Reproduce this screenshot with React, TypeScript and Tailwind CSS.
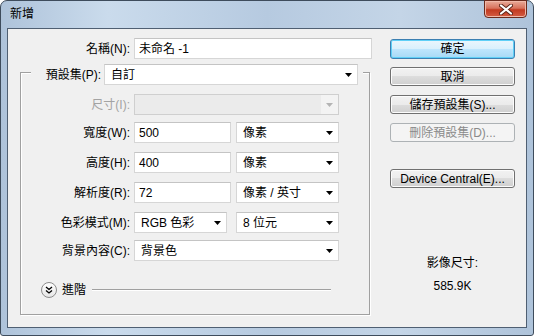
import React from "react";

const font = "font-['Liberation_Sans','Noto_Sans_CJK_TC',sans-serif]";

function Arrow({ disabled }: { disabled?: boolean }) {
  return (
    <svg width="7" height="4" viewBox="0 0 7 4" className="shrink-0">
      <polygon points="0,0 7,0 3.5,4" fill={disabled ? "#b4b4b4" : "#000"} />
    </svg>
  );
}

function Field({ value, w }: { value: string; w: string }) {
  return (
    <div className={`${w} h-[21px] bg-white border border-[#d6d6d6] border-t-[#c4c4c4] flex items-center pl-[4px] text-[12px]`}>
      {value}
    </div>
  );
}

function Select({ value, w, disabled }: { value?: string; w: string; disabled?: boolean }) {
  if (disabled) {
    return (
      <div className={`${w} h-[21px] border border-[#cfcfcf] bg-[#ebebeb] flex`}>
        <div className="flex-1" />
        <div className="w-[17px] bg-[#f3f3f3] flex items-center justify-center">
          <Arrow disabled />
        </div>
      </div>
    );
  }
  return (
    <div className={`${w} h-[21px] bg-white border border-[#d6d6d6] border-t-[#c4c4c4] flex items-center pl-[6px] pr-[5px] text-[12px]`}>
      <span className="flex-1">{value}</span>
      <Arrow />
    </div>
  );
}

function Btn({
  children,
  kind = "normal",
  className = "",
}: {
  children: React.ReactNode;
  kind?: "normal" | "primary" | "disabled";
  className?: string;
}) {
  const skin =
    kind === "primary"
      ? "border-[#3c7fb1] bg-[linear-gradient(#eaf6fd,#d9f0fc_50%,#bee6fd_50%,#a7d9f5)] shadow-[inset_0_0_0_1px_#5fd0f7]"
      : kind === "disabled"
      ? "border-[#adb2b5] bg-[#f4f4f4] text-[#8a8a8a]"
      : "border-[#707070] bg-[linear-gradient(#f2f2f2,#ebebeb_50%,#dddddd_50%,#cfcfcf)] shadow-[inset_0_0_0_1px_#fcfcfc]";
  return (
    <div className={`w-[125px] h-[19px] rounded-[3px] border ${skin} flex items-center justify-center text-[12px] ${className}`}>
      {children}
    </div>
  );
}

function Row({
  label,
  disabled,
  className = "",
  children,
}: {
  label: string;
  disabled?: boolean;
  className?: string;
  children: React.ReactNode;
}) {
  return (
    <div className={`flex items-center ${className}`}>
      <div className={`w-[113px] pr-[4px] text-right text-[12px] ${disabled ? "text-[#a3a3a3]" : ""}`}>{label}</div>
      {children}
    </div>
  );
}

export default function App() {
  return (
    <div className={`${font} w-[534px] h-[336px] flex flex-col px-[6px] pb-[7px] border border-[#3e4c5c] rounded-t-[7px] rounded-b-[3px] bg-[linear-gradient(90deg,#aec3da,#cadbec_20%,#b6cae0_50%,#c4d5e7_75%,#aec3da)] text-black`}>
      {/* title bar */}
      <div className="h-[27px] flex items-start justify-between">
        <div className="pl-[3px] pt-[4px] text-[12px]">新增</div>
        <div className="w-[43px] h-[18px] -mt-px rounded-b-[4px] border border-[#6b2a1c] bg-[linear-gradient(#e9ab99,#d7725c_45%,#c23a20_55%,#d45c43)] shadow-[inset_0_0_0_1px_#f0b9a9] flex items-center justify-center">
          <svg width="14" height="11" viewBox="0 0 14 11">
            <path d="M2 1.5 L12 9.5 M12 1.5 L2 9.5" stroke="#5a2418" strokeWidth="4" strokeLinecap="round" />
            <path d="M2 1.5 L12 9.5 M12 1.5 L2 9.5" stroke="#ffffff" strokeWidth="2.2" strokeLinecap="round" />
          </svg>
        </div>
      </div>

      {/* client */}
      <div className="flex-1 border border-[#4f5f72] bg-[#f0f0f0] flex">
        {/* left column */}
        <div className="w-[364px] pt-[9px]">
          <div className="flex items-center">
            <div className="w-[126px] pr-[4px] text-right text-[12px]">名稱(N):</div>
            <Field value="未命名 -1" w="w-[238px]" />
          </div>

          <div className="ml-[12px] mt-[13px] w-[350px] h-[243px] border border-[#a0a0a0] shadow-[1px_1px_0_#fff,inset_1px_1px_0_#fff]">
            <div className="-mt-[9px] ml-[10px] w-[332px] pr-[5px] bg-[#f0f0f0] flex items-center">
              <div className="w-[73px] pr-[3px] text-right text-[12px]">預設集(P):</div>
              <Select value="自訂" w="w-[254px]" />
            </div>

            <Row label="尺寸(I):" disabled className="mt-[9px]">
              <Select w="w-[205px]" disabled />
            </Row>

            <Row label="寬度(W):" className="mt-[7px]">
              <Field value="500" w="w-[97px]" />
              <div className="ml-[5px]">
                <Select value="像素" w="w-[103px]" />
              </div>
            </Row>

            <Row label="高度(H):" className="mt-[9px]">
              <Field value="400" w="w-[97px]" />
              <div className="ml-[5px]">
                <Select value="像素" w="w-[103px]" />
              </div>
            </Row>

            <Row label="解析度(R):" className="mt-[9px]">
              <Field value="72" w="w-[97px]" />
              <div className="ml-[5px]">
                <Select value="像素 / 英寸" w="w-[103px]" />
              </div>
            </Row>

            <Row label="色彩模式(M):" className="mt-[9px]">
              <Select value="RGB 色彩" w="w-[93px]" />
              <div className="ml-[9px]">
                <Select value="8 位元" w="w-[103px]" />
              </div>
            </Row>

            <Row label="背景內容(C):" className="mt-[7px]">
              <Select value="背景色" w="w-[205px]" />
            </Row>

            <div className="mt-[20px] ml-[20px] flex items-center">
              <div className="w-[16px] h-[16px] rounded-full border border-[#8c8c8c] bg-[linear-gradient(#ffffff,#e6e6e6)] flex items-center justify-center">
                <svg width="8" height="8" viewBox="0 0 8 8">
                  <path d="M1 1 L4 3.5 L7 1 M1 4.5 L4 7 L7 4.5" stroke="#000" strokeWidth="1.3" fill="none" />
                </svg>
              </div>
              <span className="ml-[5px] text-[12px]">進階</span>
              <div className="ml-[6px] w-[239px] h-[2px] border-t border-t-[#a0a0a0] border-b border-b-white" />
            </div>
          </div>
        </div>

        {/* right column */}
        <div className="ml-[18px] w-[125px] pt-[10px] flex flex-col">
          <Btn kind="primary" className="h-[20px]">確定</Btn>
          <Btn className="mt-[8px]">取消</Btn>
          <Btn className="mt-[9px]">儲存預設集(S)...</Btn>
          <Btn kind="disabled" className="mt-[9px]">刪除預設集(D)...</Btn>
          <Btn className="mt-[27px]">Device Central(E)...</Btn>
          <div className="mt-[67px] text-center text-[12px] leading-[16px]">影像尺寸:</div>
          <div className="mt-[7px] text-center text-[12px] leading-[16px]">585.9K</div>
        </div>
      </div>
    </div>
  );
}
